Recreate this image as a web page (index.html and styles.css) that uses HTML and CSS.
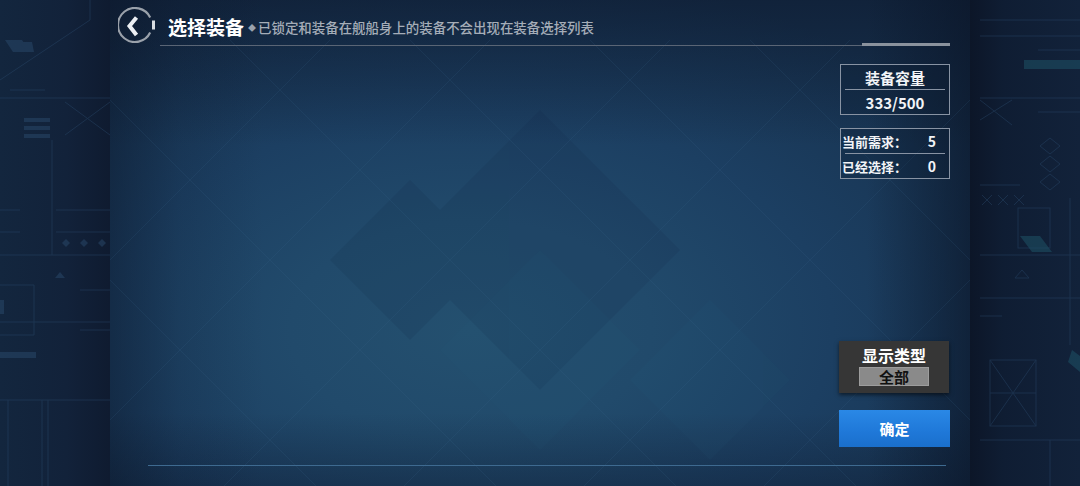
FILE: index.html
```html
<!DOCTYPE html>
<html lang="zh">
<head>
<meta charset="utf-8">
<title>选择装备</title>
<link rel="stylesheet" href="styles.css">
</head>
<body>
<div class="screen">
  <aside class="side side-left">
    <svg class="deco" viewBox="0 0 110 486" preserveAspectRatio="none">
      <g stroke="#2c4d70" stroke-width="1" fill="none" opacity="0.4">
        <polyline points="0,80 90,20 90,0"/>
        <line x1="10" y1="90" x2="45" y2="90"/>
        <line x1="0" y1="98" x2="110" y2="98"/>
        <line x1="65" y1="102" x2="110" y2="135"/>
        <line x1="65" y1="135" x2="110" y2="102"/>
        <line x1="0" y1="210" x2="20" y2="210"/>
        <line x1="0" y1="232" x2="20" y2="232"/>
        <line x1="56" y1="210" x2="110" y2="210"/>
        <line x1="56" y1="232" x2="110" y2="232"/>
        <line x1="52" y1="140" x2="52" y2="255"/>
        <line x1="0" y1="255" x2="110" y2="255"/>
        <polyline points="0,285 34,285 34,335 0,335"/>
        <line x1="0" y1="322" x2="110" y2="322"/>
        <line x1="0" y1="400" x2="110" y2="400"/>
        <line x1="8" y1="400" x2="8" y2="486"/>
        <line x1="42" y1="400" x2="42" y2="486"/>
        <line x1="48" y1="400" x2="48" y2="486"/>
        <line x1="80" y1="290" x2="110" y2="290"/>
        <line x1="80" y1="330" x2="110" y2="330"/>
      </g>
      <g fill="#2a4a6c" opacity="0.5">
        <polygon points="5,40 22,40 30,52 13,52"/>
        <polygon points="20,42 32,42 34,52 26,52"/>
        <rect x="24" y="118" width="26" height="4"/>
        <rect x="24" y="126" width="26" height="4"/>
        <rect x="24" y="134" width="26" height="4"/>
        <rect x="0" y="300" width="4" height="14"/>
        <rect x="0" y="352" width="36" height="6"/>
        <polygon points="55,278 60,272 65,278"/>
        <polygon points="62,243 66,239 70,243 66,247"/>
        <polygon points="80,243 84,239 88,243 84,247"/>
        <polygon points="98,243 102,239 106,243 102,247"/>
      </g>
    </svg>
  </aside>

  <main class="panel">
    <svg class="backdrop" viewBox="0 0 860 486" preserveAspectRatio="none">
      <g fill="#0f2440" opacity="0.12">
        <polygon points="430,110 570,250 430,390 290,250"/>
        <polygon points="300,180 380,260 300,340 220,260"/>
      </g>
      <g fill="#2b6686" opacity="0.07">
        <polygon points="430,250 530,350 430,450 330,350"/>
        <polygon points="600,300 680,380 600,460 520,380"/>
      </g>
      <g stroke="#3f6e95" stroke-width="1" opacity="0.14">
        <line x1="-60" y1="40" x2="440" y2="540"/>
        <line x1="120" y1="40" x2="620" y2="540"/>
        <line x1="300" y1="40" x2="800" y2="540"/>
        <line x1="480" y1="40" x2="900" y2="460"/>
        <line x1="640" y1="40" x2="900" y2="300"/>
        <line x1="-60" y1="220" x2="260" y2="540"/>
        <line x1="920" y1="40" x2="420" y2="540"/>
        <line x1="740" y1="40" x2="240" y2="540"/>
        <line x1="560" y1="40" x2="60" y2="540"/>
        <line x1="380" y1="40" x2="-60" y2="480"/>
        <line x1="220" y1="40" x2="-60" y2="320"/>
        <line x1="920" y1="220" x2="600" y2="540"/>
      </g>
    </svg>

    <header class="header">
      <button class="back" aria-label="返回">
        <svg viewBox="0 0 38 36" width="38" height="36">
          <path d="M32.2 10.5 A17 17 0 1 0 32.2 25.5" fill="none" stroke="#9aa1aa" stroke-width="2.2"/>
          <rect x="34" y="13.5" width="3" height="9" fill="#d9dde2"/>
          <path d="M18.5 10.5 L11.5 19 L18.5 28" fill="none" stroke="#eceff3" stroke-width="4" stroke-linejoin="miter"/>
        </svg>
      </button>
      <div class="title-bar">
        <h1 class="title">选择装备</h1>
        <span class="bullet">◆</span>
        <span class="subtitle">已锁定和装备在舰船身上的装备不会出现在装备选择列表</span>
      </div>
    </header>

    <section class="content">
      <div class="list-area"></div>
      <div class="sidebar">
        <div class="info-box capacity">
          <div class="cell">装备容量</div>
          <div class="divider"></div>
          <div class="cell">333/500</div>
        </div>
        <div class="info-box stats">
          <div class="row"><span class="label">当前需求：</span><span class="value">5</span></div>
          <div class="divider"></div>
          <div class="row"><span class="label">已经选择：</span><span class="value">0</span></div>
        </div>
        <div class="spacer"></div>
        <div class="filter">
          <div class="filter-title">显示类型</div>
          <div class="filter-value">全部</div>
        </div>
        <button class="confirm">确定</button>
      </div>
    </section>

    <footer class="footer"><div class="footer-line"></div></footer>
  </main>

  <aside class="side side-right">
    <svg class="deco" viewBox="0 0 110 486" preserveAspectRatio="none">
      <g stroke="#2c4d70" stroke-width="1" fill="none" opacity="0.4">
        <line x1="10" y1="20" x2="110" y2="20"/>
        <line x1="10" y1="36" x2="110" y2="36"/>
        <line x1="68" y1="50" x2="110" y2="50"/>
        <line x1="10" y1="98" x2="110" y2="98"/>
        <line x1="68" y1="112" x2="110" y2="112"/>
        <line x1="10" y1="100" x2="42" y2="125"/>
        <line x1="10" y1="120" x2="42" y2="100"/>
        <line x1="10" y1="185" x2="50" y2="185"/>
        <rect x="48" y="208" width="32" height="40"/>
        <line x1="100" y1="198" x2="100" y2="345"/>
        <line x1="10" y1="255" x2="110" y2="255"/>
        <line x1="10" y1="298" x2="110" y2="298"/>
        <line x1="10" y1="316" x2="32" y2="316"/>
        <rect x="20" y="360" width="46" height="66"/>
        <line x1="20" y1="360" x2="66" y2="426"/>
        <line x1="66" y1="360" x2="20" y2="426"/>
        <line x1="20" y1="393" x2="66" y2="393"/>
        <line x1="10" y1="440" x2="110" y2="440"/>
        <line x1="80" y1="440" x2="80" y2="486"/>
        <polygon points="45,278 52,270 59,278"/>
        <path d="M70 146 l10 -8 l10 8 l-10 8z M70 164 l10 -8 l10 8 l-10 8z M70 182 l10 -8 l10 8 l-10 8z"/>
        <path d="M12 195 l10 10 M22 195 l-10 10 M28 195 l10 10 M38 195 l-10 10 M44 195 l10 10 M54 195 l-10 10"/>
      </g>
      <g fill="#1e5266" opacity="0.55">
        <rect x="54" y="60" width="56" height="9"/>
        <polygon points="50,236 70,236 82,252 62,252"/>
        <polygon points="102,350 110,356 110,372 98,362"/>
      </g>
    </svg>
  </aside>
</div>
</body>
</html>
```
FILE: styles.css
```css
* { box-sizing: border-box; }

html, body {
  margin: 0;
  padding: 0;
  width: 1080px;
  height: 486px;
  overflow: hidden;
  background: #0f1c31;
  font-family: "Noto Sans CJK SC", "Noto Sans", "Liberation Sans", sans-serif;
}

.screen {
  display: grid;
  grid-template-columns: 110px 860px 110px;
  width: 1080px;
  height: 486px;
}

.side {
  position: relative;
  overflow: hidden;
}

.side-left {
  background: linear-gradient(90deg, #13263e 0%, #12223a 60%, #0f1b30 100%);
}

.side-right {
  background: linear-gradient(90deg, #0c1628 0%, #0f1d33 30%, #12223a 100%);
}

.deco {
  position: absolute;
  inset: 0;
  width: 100%;
  height: 100%;
}

.panel {
  position: relative;
  display: flex;
  flex-direction: column;
  height: 486px;
  overflow: hidden;
  background:
    linear-gradient(90deg, rgba(10,20,38,0.45) 0%, rgba(10,20,38,0.15) 8%, rgba(10,20,38,0) 18%, rgba(10,20,38,0) 88%, rgba(10,20,38,0.6) 100%),
    linear-gradient(180deg, rgba(12,22,42,0.55) 0%, rgba(12,22,42,0) 30%, rgba(12,22,42,0) 85%, rgba(12,22,42,0.35) 100%),
    radial-gradient(ellipse 70% 75% at 42% 68%, #24506f 0%, #214a6b 30%, #1c3f62 60%, #17324f 100%);
}

.backdrop {
  position: absolute;
  inset: 0;
  width: 100%;
  height: 100%;
  pointer-events: none;
}

.header {
  position: relative;
  display: flex;
  align-items: flex-end;
  height: 46px;
  padding: 0 20px 0 8px;
}

.back {
  width: 38px;
  height: 36px;
  margin: 0 0 3px 0;
  padding: 0;
  border: 0;
  background: transparent;
  display: flex;
}

.title-bar {
  position: relative;
  flex: 1;
  display: flex;
  align-items: center;
  height: 36px;
  margin-left: 4px;
  padding: 0 0 3px 8px;
  border-bottom: 1px solid #5a6575;
}

.title-bar::after {
  content: "";
  position: absolute;
  right: 0;
  bottom: -1px;
  width: 88px;
  height: 3px;
  background: #8a929d;
}

.title {
  margin: 0;
  font-size: 19px;
  font-weight: 700;
  color: #ffffff;
}

.bullet {
  margin: 3px 2px 0 4px;
  font-size: 8px;
  color: #9aa2ad;
}

.subtitle {
  margin-top: 2px;
  font-size: 13.45px;
  font-weight: 500;
  color: #a5adb8;
}

.content {
  position: relative;
  flex: 1;
  display: flex;
  padding: 0 20px 9px 0;
}

.list-area {
  flex: 1;
}

.sidebar {
  width: 111px;
  display: flex;
  flex-direction: column;
  padding-top: 18px;
}

.info-box {
  width: 110px;
  margin-left: 1px;
  border: 1px solid #8893a3;
  background: rgba(12, 26, 48, 0.25);
  color: #f2f4f7;
  font-weight: 700;
}

.capacity {
  height: 51px;
}

.capacity .cell {
  height: 24px;
  display: flex;
  align-items: center;
  justify-content: center;
  font-size: 15px;
}

.divider {
  height: 1px;
  margin: 0 4px;
  background: #8893a3;
}

.stats {
  height: 51px;
  margin-top: 13px;
}

.stats .row {
  height: 24px;
  display: flex;
  align-items: center;
  justify-content: space-between;
  padding: 0 13px 0 1px;
  font-size: 13px;
}

.value {
  font-size: 14px;
}

.spacer {
  flex: 1;
}

.filter {
  width: 110px;
  height: 52px;
  background: #363636;
  box-shadow: 0 2px 4px rgba(0, 0, 0, 0.55);
  display: flex;
  flex-direction: column;
  align-items: center;
  padding-top: 2px;
}

.filter-title {
  font-size: 16px;
  font-weight: 700;
  color: #ffffff;
  line-height: 24px;
}

.filter-value {
  width: 70px;
  height: 19px;
  background: #8a8a8a;
  border: 1px solid #9d9d9d;
  color: #111111;
  font-size: 15px;
  font-weight: 700;
  display: flex;
  align-items: center;
  justify-content: center;
  line-height: 1;
}

.confirm {
  width: 111px;
  height: 37px;
  margin-top: 17px;
  border: 0;
  padding: 0;
  background: linear-gradient(180deg, #2a88e6 0%, #1f78d8 60%, #1a6fcc 100%);
  color: #ffffff;
  font-family: inherit;
  font-size: 15px;
  font-weight: 700;
}

.footer {
  position: relative;
  height: 30px;
  padding: 9px 24px 0 38px;
}

.footer-line {
  height: 1px;
  background: #3e6a90;
}
```
